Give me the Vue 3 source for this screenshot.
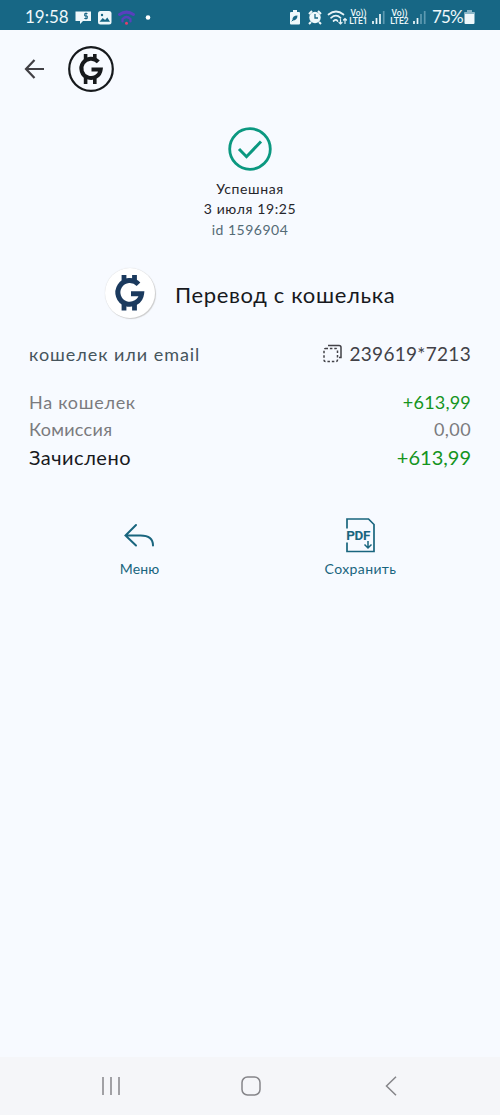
<script setup>
const amounts = [
  { label: 'На кошелек', value: '+613,99', kind: 'wallet' },
  { label: 'Комиссия', value: '0,00', kind: 'fee' },
  { label: 'Зачислено', value: '+613,99', kind: 'total' },
]
</script>

<template>
  <div class="screen">
    <header class="status">
      <span class="clock">19:58</span>
      <svg class="notices" width="80" height="20" viewBox="0 0 80 20">
        <path d="M0.500 4.500h15.500v9.500H8l-3 3v-3H.500z" fill="#eef8fb" />
        <path d="M12.500 6.500h-2.800v2.500h2.600v2.500H9.300M11 5.500v7" fill="none" stroke="#176785" stroke-width="1" />
        <rect x="23" y="4" width="13.500" height="13.500" rx="2.500" fill="#eef8fb" />
        <path d="M24.500 14.700l3.200-3.600 2.400 2 2.200-2.600 2.700 4.200z" fill="#176785" />
        <circle cx="27" cy="8" r="1.200" fill="#176785" />
        <g fill="none" stroke="#5840bd" stroke-linecap="round">
          <path d="M44.500 7.500q7-4.800 14 0" stroke-width="3" />
          <path d="M47.500 14.500v-2.500q4-4 8 0v2.500" stroke-width="2.200" />
        </g>
        <circle cx="51.500" cy="16.200" r="1.500" fill="#e33d6d" />
        <circle cx="73" cy="10.500" r="2.300" fill="#fff" />
      </svg>
      <svg class="indicators" width="62" height="20" viewBox="0 0 62 20">
        <path d="M4 5h2V3h4v2h2q1 0 1 1v10.500q0 1-1 1H4q-1 0-1-1V6q0-1 1-1z" fill="#eef8fb" />
        <path d="M5.500 13.500q-.5-5 5-5-.2 5-5 5z" fill="#176785" />
        <path d="M4.700 14.200l3.500-3.200" stroke="#176785" stroke-width="1" />
        <circle cx="28" cy="10.500" r="5.700" fill="#eef8fb" />
        <path d="M22 7l3-3M34 7l-3-3M24 15l-2 2M32 15l2 2" stroke="#eef8fb" stroke-width="2" />
        <path d="M28 7v4h3" fill="none" stroke="#176785" stroke-width="1.300" />
        <g fill="none" stroke="#e7f3f7" stroke-width="1.700" stroke-linecap="round">
          <path d="M41.500 7.500q7.500-6 15 0M44 10.800q5-4.200 9.500 0M46.500 14q2.500-2.200 4 0" />
          <path d="M53.500 12.500v4.500m-1.500-1.500l1.500 1.500 1.500-1.500M58 16.500v-5M56.500 13l1.500-1.500 1.500 1.500" stroke-width="1.200" />
        </g>
      </svg>
      <span class="lte"><span>Vo))</span><span>LTE1</span></span>
      <svg class="signal" width="15" height="16" viewBox="0 0 15 16">
        <path d="M2 12v3M5.500 9v6M9 5v10" stroke="#eef8fb" stroke-width="1.700" />
        <path d="M12.700 2v13" stroke="#5d9ab1" stroke-width="1.700" />
      </svg>
      <span class="lte second"><span>Vo))</span><span>LTE2</span></span>
      <svg class="signal" width="15" height="16" viewBox="0 0 15 16">
        <path d="M2 12v3M5.500 9v6" stroke="#eef8fb" stroke-width="1.700" />
        <path d="M9 5v10M12.700 2v13" stroke="#5d9ab1" stroke-width="1.700" />
      </svg>
      <span class="charge">75%</span>
      <svg class="battery" width="11" height="16" viewBox="0 0 11 16">
        <path d="M3 1h5v2h1.500q1 0 1 1v10q0 1-1 1h-8q-1 0-1-1V4q0-1 1-1H3z" fill="#eef8fb" />
        <path d="M3 1h5v2h2.500v2H.500V3H3z" fill="#8ab7c8" />
      </svg>
    </header>

    <nav class="topbar">
      <svg width="20" height="20" viewBox="0 0 20 20" fill="none" stroke="#424045" stroke-width="2.200">
        <path d="M20 10H2M10.500 1L2 10l8.500 9" />
      </svg>
      <svg class="brand" width="46" height="46" viewBox="0 0 46 46">
        <circle cx="23" cy="23" r="21.800" fill="none" stroke="#16191c" stroke-width="2.200" />
        <path d="M30.300 15.900A9.700 9.700 0 1 0 32.700 23.500H23.500" fill="none" stroke="#16191c" stroke-width="4" />
        <path d="M17.600 8v7M26.800 8v6M17.600 38v-7M26.800 38v-6" stroke="#16191c" stroke-width="3.600" />
      </svg>
    </nav>

    <main>
      <section class="result">
        <svg width="44" height="44" viewBox="0 0 44 44" fill="none" stroke="#0b9880">
          <circle cx="22" cy="22" r="20.300" stroke-width="2.800" />
          <path d="M11 22l7.500 7.700L33 14.500" stroke-width="3" />
        </svg>
        <span class="state">Успешная</span>
        <span class="date">3 июля 19:25</span>
        <span class="number">id 1596904</span>
      </section>

      <section class="operation">
        <div class="badge">
          <svg width="50" height="50" viewBox="-2 -2 50 50">
            <path d="M31.500 14.300A11.900 11.900 0 1 0 34.600 23.700H24" fill="none" stroke="#1b3a5e" stroke-width="5" />
            <path d="M17 5v7M27.500 5v7M17 40.500v-7M27.500 40.500v-7" stroke="#1b3a5e" stroke-width="4.800" />
          </svg>
        </div>
        <h1>Перевод с кошелька</h1>
      </section>

      <section class="account">
        <span class="key">кошелек или email</span>
        <span class="copy">
          <svg width="20" height="19" viewBox="0 0 20 19" fill="none" stroke="#424147" stroke-width="1.500">
            <path d="M5 1.500h11q2 0 2 2v10h-2" />
            <rect x="1" y="4.500" width="13.500" height="13" rx="1.500" stroke-dasharray="2.500 1.900" />
          </svg>
          <span class="wallet-id">239619*7213</span>
        </span>
      </section>

      <section class="amounts">
        <div v-for="row in amounts" :key="row.kind" class="row" :class="row.kind">
          <span class="label">{{ row.label }}</span>
          <span class="value">{{ row.value }}</span>
        </div>
      </section>

      <section class="actions">
        <div class="action menu">
          <svg width="36" height="36" viewBox="0 0 36 36" fill="none" stroke="#19657e" stroke-width="2" stroke-linecap="round">
            <path d="M14 8L3.500 18.500l10.500 10M3.500 18.500h15q12.500 0 12.500 10" />
          </svg>
          <span>Меню</span>
        </div>
        <div class="action save">
          <svg width="36" height="36" viewBox="0 0 36 36">
            <path d="M4 11.500V2h21.500l5.500 5.500v27H4V25.500" fill="none" stroke="#19657e" stroke-width="1.700" />
            <text x="3.300" y="23.300" textLength="24" lengthAdjust="spacing">PDF</text>
            <path d="M25 24v7m-3.500-3.500L25 31l3.500-3.500" fill="none" stroke="#19657e" stroke-width="1.500" />
          </svg>
          <span>Сохранить</span>
        </div>
      </section>
    </main>

    <footer class="navigation">
      <svg width="20" height="20" viewBox="0 0 20 20"><path d="M2 1v18M10 1v18M18 1v18" /></svg>
      <svg width="20" height="20" viewBox="0 0 20 20"><rect x="1" y="1" width="18" height="18" rx="5.500" /></svg>
      <svg width="20" height="20" viewBox="0 0 20 20"><path d="M15 .800L5.500 10l9.500 9.200" /></svg>
    </footer>
  </div>
</template>

<style>
body { background: #f7faff; }
</style>

<style scoped>
.screen { box-sizing: border-box; width: 500px; height: 1115px; display: flex; flex-direction: column; background: #f7faff; color: #26262b; font-family: Lato, "Open Sans", "Noto Sans", sans-serif; white-space: nowrap; overflow: hidden; }
.screen svg { display: block; flex: none; }
.status { display: flex; align-items: center; height: 30px; padding: 3px 25px 0; box-sizing: border-box; background: #176785; color: #eef8fb; flex: none; }
.clock { width: 43px; font-size: 17px; letter-spacing: 0; }
.notices { margin-left: 7px; }
.indicators { margin-left: 132px; }
.lte { width: 21px; display: flex; flex-direction: column; align-items: center; font: 500 8.5px/8px Roboto, sans-serif; letter-spacing: 0; margin-left: -1px; }
.lte.second { margin-left: 3px; }
.signal { margin-left: 2px; }
.charge { width: 31px; margin-left: 5px; font-size: 17px; letter-spacing: -.8px; }
.battery { margin-left: 1px; }
.topbar { height: 78px; box-sizing: border-box; display: flex; align-items: center; padding-left: 24px; flex: none; }
.brand { margin-left: 24px; }
main { flex: 1; }
.result { display: flex; flex-direction: column; align-items: center; padding-top: 19px; font-size: 14px; line-height: 20px; }
.result .state { margin-top: 8px; letter-spacing: .6px; }
.result .date { letter-spacing: .6px; }
.result .number { color: #546b76; letter-spacing: .5px; margin-top: 1px; }
.operation { display: flex; align-items: center; margin: 28px 0 0 105px; }
.badge { width: 50px; height: 50px; border-radius: 50%; background: #fff; box-shadow: 1px 1px 1px #ccc, 0 0 1px #ccc; }
h1 { margin: 3px 0 0 20px; font-size: 22px; font-weight: 400; line-height: 47px; letter-spacing: .65px; color: #17191d; }
.account { display: flex; align-items: center; justify-content: space-between; margin: 22px 29px 0; height: 26px; font-size: 18px; }
.key { color: #46545c; letter-spacing: .95px; margin-top: 2px; }
.copy { display: flex; align-items: center; gap: 6px; }
.wallet-id { font-size: 19px; letter-spacing: .3px; color: #424147; }
.amounts { margin: 22px 29px 0; font-size: 18px; }
.row { height: 27px; display: flex; align-items: center; justify-content: space-between; color: #7b7b7e; }
.row.total { height: 29px; }
.wallet .label { letter-spacing: .7px; }
.fee .label { letter-spacing: .3px; }
.wallet .value { letter-spacing: .2px; }
.fee .value { letter-spacing: .4px; }
.total .label { color: #17191d; font-size: 20px; letter-spacing: .5px; }
.wallet .value, .total .value { color: #15941e; }
.total .value { font-size: 20px; }
.actions { display: grid; grid-template-columns: 221px 221px; padding-left: 29px; margin-top: 46px; color: #19657e; }
.action { display: flex; flex-direction: column; align-items: center; font-size: 14px; line-height: 20px; gap: 6px; letter-spacing: .4px; }
.menu { letter-spacing: .1px; }
.save text { fill: #19657e; font: 700 13.5px Roboto, sans-serif; letter-spacing: 0; }
.navigation { height: 58px; display: flex; align-items: center; justify-content: space-between; padding: 0 99px 0 101px; background: #f5f6f9; flex: none; }
.navigation svg { fill: none; stroke: #858589; stroke-width: 1.5; }
</style>
